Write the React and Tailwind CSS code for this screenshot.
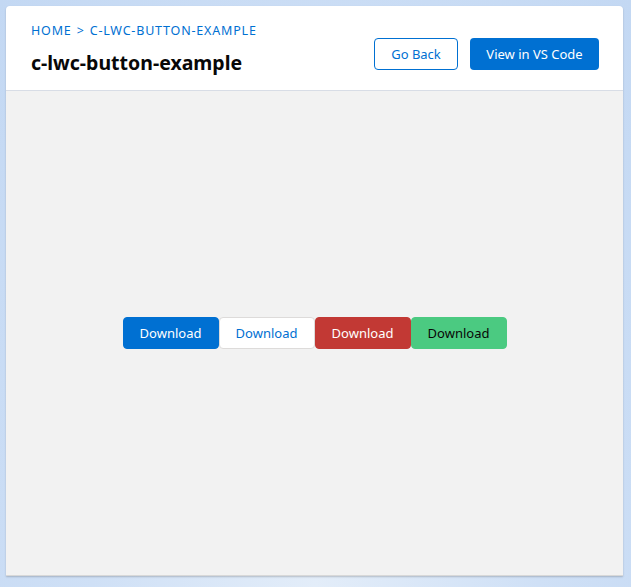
export default function App() {
  const font = { fontFamily: '"Noto Sans", "Open Sans", sans-serif' };
  return (
    <div
      className="w-[631px] h-[587px] pt-[6px] pl-[6px] bg-[radial-gradient(ellipse_at_50%_100%,#e3edf9_0%,#cfe0f6_50%,#c3d8f3_100%)]"
      style={font}
    >
      <div className="w-[617px] h-[570px] rounded-t-[4px] flex flex-col overflow-hidden shadow-[0_1px_2px_rgba(0,0,0,0.2)] border-b border-[#d8d8d8]">
        <header className="h-[85px] shrink-0 bg-white border-b border-[#d8dde6] flex items-start justify-between pl-[25px] pr-[24px]">
          <div className="pt-[17px]">
            <nav className="text-[12.5px] tracking-[0.065em] text-[#0070d2] leading-[16px]">
              HOME <span className="mx-[1px]">&gt;</span> C-LWC-BUTTON-EXAMPLE
            </nav>
            <h1 className="mt-[11px] text-[19.5px] font-bold leading-[26px] text-[#080707]">c-lwc-button-example</h1>
          </div>
          <div className="flex gap-[12px] pt-[32px]">
            <button className="h-[32px] w-[84px] rounded-[4px] border border-[#0070d2] bg-white text-[#0070d2] text-[13px] pt-[1px]">
              Go Back
            </button>
            <button className="h-[32px] w-[129px] rounded-[4px] bg-[#0070d2] text-white text-[13px] pt-[1px]">
              View in VS Code
            </button>
          </div>
        </header>
        <main className="flex-1 bg-[#f2f2f2] flex items-center justify-center">
          <div className="flex">
            <button className="h-[32px] w-[96px] rounded-[4px] bg-[#0070d2] border border-[#0070d2] text-white text-[13px] pt-[1px]">
              Download
            </button>
            <button className="h-[32px] w-[96px] rounded-[4px] bg-white border border-[#dddbda] text-[#0070d2] text-[13px] pt-[1px]">
              Download
            </button>
            <button className="h-[32px] w-[96px] rounded-[4px] bg-[#c23934] border border-[#c23934] text-white text-[13px] pt-[1px]">
              Download
            </button>
            <button className="h-[32px] w-[96px] rounded-[4px] bg-[#4bca81] border border-[#4bca81] text-[#080707] text-[13px] pt-[1px]">
              Download
            </button>
          </div>
        </main>
      </div>
    </div>
  );
}
